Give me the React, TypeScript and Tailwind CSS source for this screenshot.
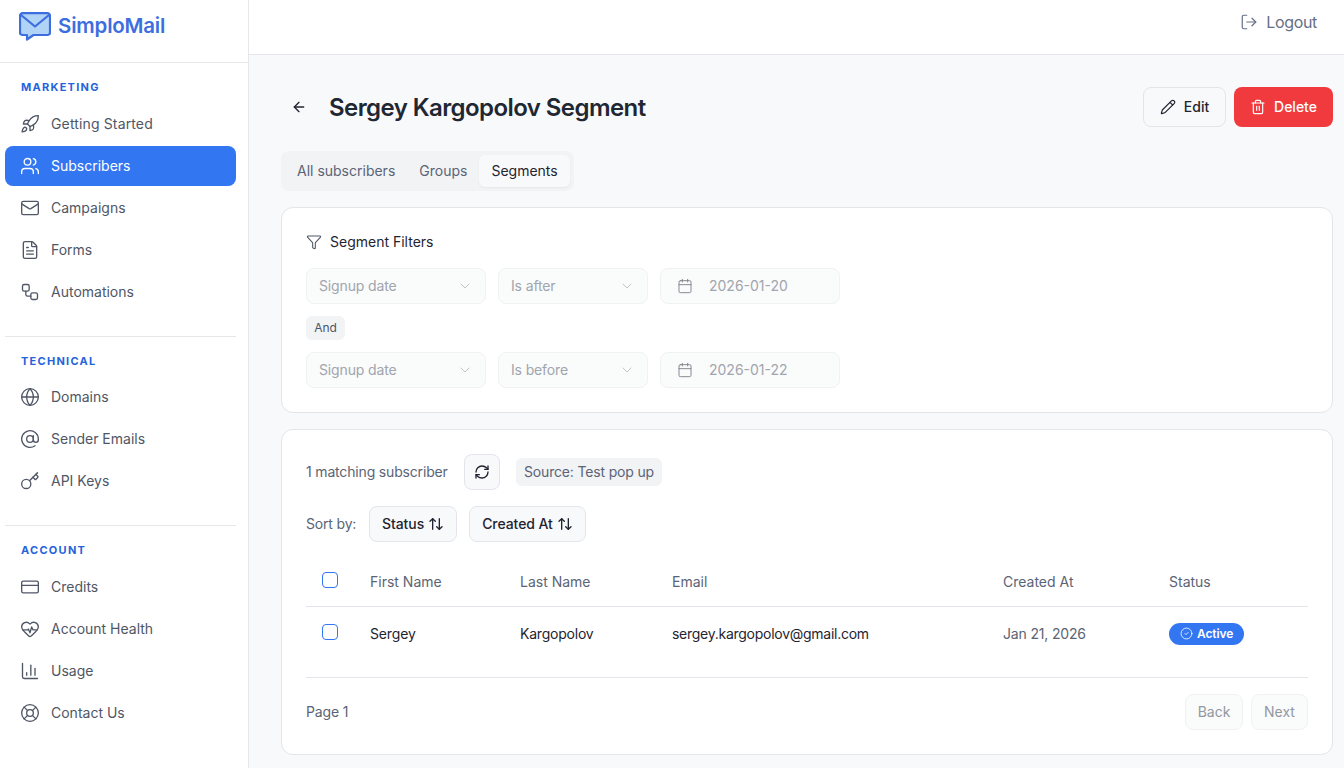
import React from "react";
import {
  Rocket, Users, Mail, FileText, Workflow, Globe, AtSign, Key, CreditCard, HeartPulse, ChartColumn, LifeBuoy,
  LogOut, ArrowLeft, Pencil, Trash2, Funnel, ChevronDown, Calendar, RefreshCw, ArrowUpDown, CircleCheck,
} from "lucide-react";

function NavItem({ icon: Icon, label, active, labelClass }: { icon: React.ElementType; label: string; active?: boolean; labelClass?: string }) {
  return (
    <a className={"flex h-10 items-center gap-[11px] rounded-lg px-[15px] text-sm " + (active ? "bg-[#3276f1] text-white" : "text-[#4f5665]")}>
      <Icon size={20} strokeWidth={1.6} />
      <span className={labelClass}>{label}</span>
    </a>
  );
}

function SectionLabel({ children }: { children: React.ReactNode }) {
  return <div className="h-4 px-4 text-[11px] leading-4 font-bold tracking-[0.115em] text-[#2563db]">{children}</div>;
}

function Select({ label, width }: { label: string; width: string }) {
  return (
    <div className={"flex h-9 items-center justify-between rounded-lg border border-[#f0f1f3] bg-[#fafbfb] pl-3 pr-3 text-sm text-[#a1a5ad] " + width}>
      <span className="tracking-[-0.01em]">{label}</span>
      <ChevronDown size={16} strokeWidth={1.25} className="text-[#b4b8bf]" />
    </div>
  );
}

function DateField({ value }: { value: string }) {
  return (
    <div className="flex h-9 w-[180px] items-center gap-4 rounded-lg border border-[#f0f1f3] bg-[#fafbfb] pl-[16px] text-sm text-[#a1a5ad]">
      <Calendar size={16} strokeWidth={1.4} className="text-[#7d828c]" />
      <span>{value}</span>
    </div>
  );
}

function SortButton({ label }: { label: string }) {
  return (
    <button className="flex h-9 items-center gap-1 rounded-lg border border-[#e3e5ea] bg-[#f8f9fb] px-3 text-sm font-medium tracking-[-0.005em] text-[#1f2430]">
      {label}
      <ArrowUpDown size={16} strokeWidth={2} />
    </button>
  );
}

function Checkbox() {
  return <span className="mb-1 block h-4 w-4 rounded-[4px] border border-[#3276f1] bg-white" />;
}

export default function App() {
  return (
    <div className="flex h-screen overflow-hidden bg-[#f8f9fb] font-['Inter',sans-serif]">
      <aside className="w-[249px] shrink-0 border-r border-[#e5e7eb] bg-white">
        <div className="flex h-[63px] items-start gap-[7px] border-b border-[#e5e7eb] pl-[19px] pt-[12px]">
          <svg width="32" height="29" viewBox="0 0 32 29" fill="none">
            <path d="M3.500 1.200h25a2.500 2.500 0 0 1 2.500 2.500v16.800a2.500 2.500 0 0 1-2.500 2.500H14.500l-6.500 4.500v-4.500H3.500A2.500 2.500 0 0 1 1 20.500V3.700a2.500 2.500 0 0 1 2.500-2.500Z" fill="#b1d3f6" stroke="#3d6ee0" strokeWidth="2.200" strokeLinejoin="round" />
            <path d="M2 3l14 11.500L30 3" stroke="#3d6ee0" strokeWidth="2.200" strokeLinejoin="round" />
          </svg>
          <span className="text-[20.5px] leading-7 font-semibold tracking-[-0.01em] text-[#3d6ee0]">SimploMail</span>
        </div>
        <nav className="pl-[5px] pr-3">
          <div className="pt-4">
            <SectionLabel>MARKETING</SectionLabel>
            <div className="mt-[9px] flex flex-col gap-[2px]">
              <NavItem icon={Rocket} label="Getting Started" labelClass="tracking-[0.01em]" />
              <NavItem icon={Users} label="Subscribers" active />
              <NavItem icon={Mail} label="Campaigns" />
              <NavItem icon={FileText} label="Forms" />
              <NavItem icon={Workflow} label="Automations" />
            </div>
          </div>
          <div className="mt-6 border-t border-[#e5e7eb] pt-4">
            <SectionLabel>TECHNICAL</SectionLabel>
            <div className="mt-2 flex flex-col gap-[2px]">
              <NavItem icon={Globe} label="Domains" />
              <NavItem icon={AtSign} label="Sender Emails" />
              <NavItem icon={Key} label="API Keys" />
            </div>
          </div>
          <div className="mt-6 border-t border-[#e5e7eb] pt-4">
            <SectionLabel>ACCOUNT</SectionLabel>
            <div className="mt-[9px] flex flex-col gap-[2px]">
              <NavItem icon={CreditCard} label="Credits" />
              <NavItem icon={HeartPulse} label="Account Health" />
              <NavItem icon={ChartColumn} label="Usage" />
              <NavItem icon={LifeBuoy} label="Contact Us" />
            </div>
          </div>
        </nav>
      </aside>

      <div className="min-w-0 flex-1">
        <header className="flex h-[55px] items-center justify-end gap-2 border-b border-[#e5e7eb] bg-white pr-[27px] pb-[10px] text-[#667085]">
          <LogOut size={18} strokeWidth={1.6} />
          <span className="text-base tracking-[-0.02em]">Logout</span>
        </header>

        <main className="pl-8 pr-[11px] pt-8">
          <div className="flex h-10 items-center justify-between">
            <div className="flex items-center">
              <span className="flex w-[48px] justify-start pl-[10px] text-[#1f2430]"><ArrowLeft size={16} strokeWidth={2} /></span>
              <h1 className="pt-[2px] text-2xl font-semibold tracking-[-0.024em] text-[#1f2733]">Sergey Kargopolov Segment</h1>
            </div>
            <div className="flex gap-2">
              <button className="flex h-10 w-[83px] items-center justify-center gap-2 rounded-lg border border-[#e3e5ea] bg-[#f8f9fb] text-sm font-medium text-[#1f2430]">
                <Pencil size={16} strokeWidth={1.75} />Edit
              </button>
              <button className="flex h-10 w-[99px] items-center justify-center gap-2 rounded-lg bg-[#f03a3d] text-sm font-medium text-white">
                <Trash2 size={16} strokeWidth={1.75} />Delete
              </button>
            </div>
          </div>

          <div className="mt-6 flex h-10 w-fit items-center rounded-lg bg-[#f2f3f5] p-1 text-sm font-normal text-[#5b6475]">
            <span className="flex h-8 items-center px-3">All subscribers</span>
            <span className="flex h-8 items-center px-3">Groups</span>
            <span className="flex h-8 items-center rounded-md bg-[#f8f9fb] px-3 text-[#1f2430] shadow-xs">Segments</span>
          </div>

          <section className="mt-4 rounded-xl border border-[#e3e5ea] bg-white p-6">
            <div className="flex h-5 items-center gap-2 text-sm font-normal text-[#1f2430]">
              <Funnel size={16} strokeWidth={1.6} className="text-[#4f5665]" />
              Segment Filters
            </div>
            <div className="mt-4 flex flex-col items-start gap-3">
              <div className="flex gap-3">
                <Select label="Signup date" width="w-[180px]" />
                <Select label="Is after" width="w-[150px]" />
                <DateField value="2026-01-20" />
              </div>
              <span className="flex h-6 w-[39px] items-center justify-center rounded-md bg-[#f2f3f5] text-xs font-normal text-[#4b5468]">And</span>
              <div className="flex gap-3">
                <Select label="Signup date" width="w-[180px]" />
                <Select label="Is before" width="w-[150px]" />
                <DateField value="2026-01-22" />
              </div>
            </div>
          </section>

          <section className="mt-4 rounded-xl border border-[#e3e5ea] bg-white p-6">
            <div className="flex h-9 items-center gap-4">
              <span className="w-[142px] text-sm tracking-[-0.012em] text-[#5b6475]">1 matching subscriber</span>
              <button className="flex h-9 w-9 items-center justify-center rounded-lg border border-[#e3e5ea] bg-[#f8f9fb] text-[#1f2430]">
                <RefreshCw size={16} strokeWidth={2} />
              </button>
              <span className="flex h-7 items-center rounded-md bg-[#f2f3f5] px-2 text-sm tracking-[-0.012em] text-[#5b6475]">Source: Test pop up</span>
            </div>
            <div className="mt-4 flex h-9 items-center gap-3">
              <span className="w-[51px] text-sm tracking-[-0.012em] text-[#5b6475]">Sort by:</span>
              <SortButton label="Status" />
              <SortButton label="Created At" />
            </div>

            <table className="mt-4 w-full table-fixed border-collapse text-sm">
              <colgroup>
                <col className="w-[48px]" />
                <col className="w-[150px]" />
                <col className="w-[152px]" />
                <col className="w-[331px]" />
                <col className="w-[166px]" />
                <col />
              </colgroup>
              <thead>
                <tr className="h-[48px] border-b border-[#e3e5ea] text-left text-[#5b6475]">
                  <th className="px-4 font-normal"><Checkbox /></th>
                  <th className="px-4 font-normal">First Name</th>
                  <th className="px-4 font-normal">Last Name</th>
                  <th className="px-4 font-normal">Email</th>
                  <th className="px-4 font-normal">Created At</th>
                  <th className="px-4 font-normal">Status</th>
                </tr>
              </thead>
              <tbody>
                <tr className="h-[55px] text-[#1f2430]">
                  <td className="px-4"><Checkbox /></td>
                  <td className="px-4 tracking-[-0.01em]">Sergey</td>
                  <td className="px-4 tracking-[-0.015em]">Kargopolov</td>
                  <td className="px-4 whitespace-nowrap tracking-[-0.019em]">sergey.kargopolov@gmail.com</td>
                  <td className="px-4 tracking-[-0.012em] text-[#5b6475]">Jan 21, 2026</td>
                  <td className="px-4">
                    <span className="inline-flex h-[22px] items-center gap-1 rounded-full bg-[#3276f1] px-[11px] text-xs font-semibold tracking-[-0.01em] text-white">
                      <CircleCheck size={13} strokeWidth={1.5} />Active
                    </span>
                  </td>
                </tr>
              </tbody>
            </table>

            <div className="mt-4 flex items-center justify-between border-t border-[#e3e5ea] pt-4">
              <span className="text-sm tracking-[-0.012em] text-[#5b6475]">Page 1</span>
              <div className="flex gap-2">
                <button className="flex h-9 w-[58px] items-center justify-center rounded-lg border border-[#f0f1f3] bg-[#fafbfb] text-sm font-normal text-[#94979f]">Back</button>
                <button className="flex h-9 w-[57px] items-center justify-center rounded-lg border border-[#f0f1f3] bg-[#fafbfb] text-sm font-normal text-[#94979f]">Next</button>
              </div>
            </div>
          </section>
        </main>
      </div>
    </div>
  );
}
